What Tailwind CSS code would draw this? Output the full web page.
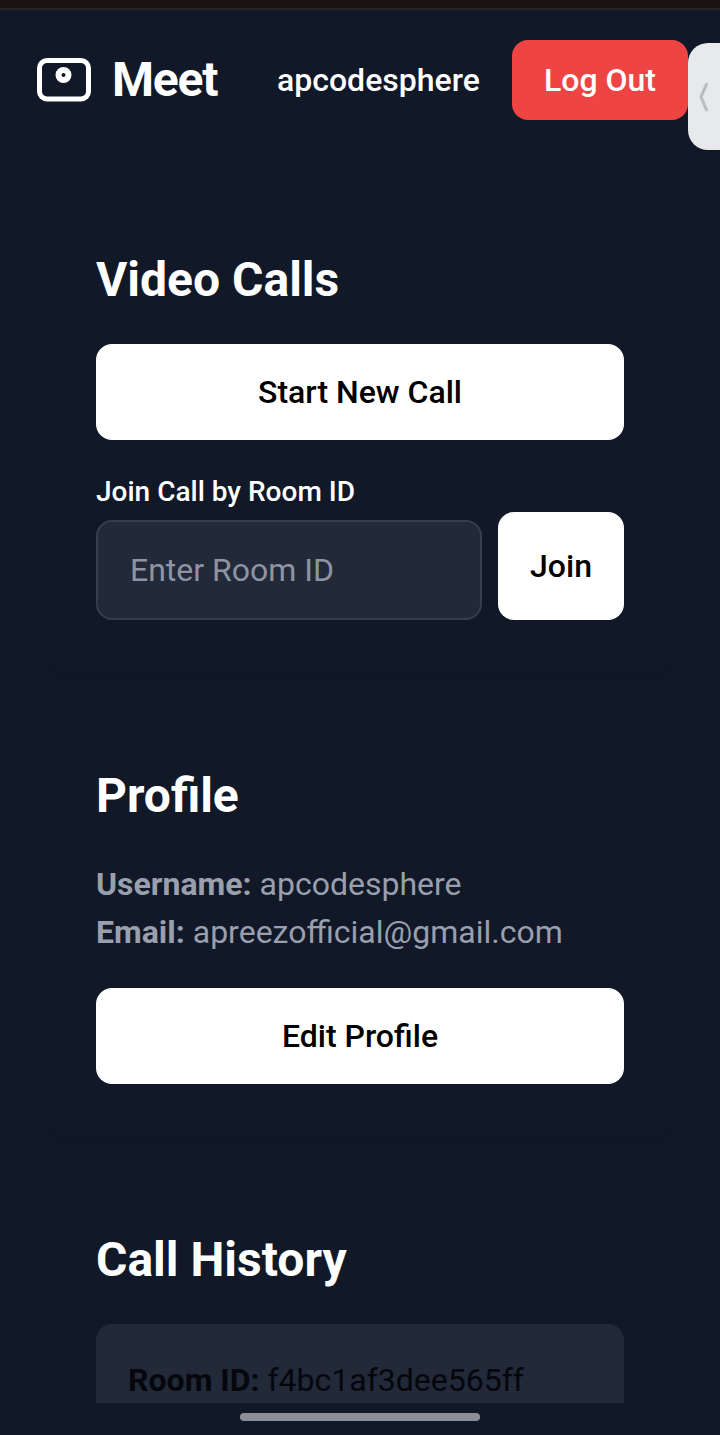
<!DOCTYPE html>
<html lang="en">
<head>
    <meta charset="utf-8">
    <meta name="viewport" content="width=device-width, initial-scale=1">
    <title>Meet</title>
    <script src="https://cdn.jsdelivr.net/npm/@tailwindcss/browser@4"></script>
</head>
<body class="bg-[#111827] font-['Roboto',sans-serif]">
    <div class="relative h-[1435px] w-[720px] overflow-hidden">
        <!-- Status strip -->
        <div class="h-[12px] bg-[#111827]">
            <div class="h-[8px] bg-[#1a1210]"></div>
            <div class="h-[2px] bg-[#2a2523]"></div>
        </div>

        <div class="h-[1391px] overflow-hidden">
            <!-- Header -->
            <header class="flex h-[140px] items-start pt-[28px] pl-[36px] shadow-[0_2px_6px_rgba(0,0,0,0.05)]">
                <div class="flex h-[80px] items-center">
                    <svg class="h-[44px] w-[56px]" viewBox="0 0 56 44" fill="none">
                        <rect x="3.5" y="2.5" width="49" height="38.5" rx="7.5" stroke="white" stroke-width="5"/>
                        <circle cx="27.5" cy="17" r="5" stroke="white" stroke-width="6"/>
                    </svg>
                    <span class="ml-[20px] w-[106px] text-[48px] font-bold leading-none tracking-[-1.2px] text-white">Meet</span>
                    <span class="ml-[59px] w-[203px] whitespace-nowrap text-[32px] font-medium text-white">apcodesphere</span>
                </div>
                <button class="ml-[32px] h-[80px] w-[176px] rounded-[16px] bg-[#ef4444] text-[32px] font-medium text-white">Log Out</button>
            </header>

            <main class="px-[48px] pt-[48px]">
                <!-- Video calls -->
                <section class="rounded-[16px] p-[48px] shadow-[0_10px_15px_-8px_rgba(0,0,0,0.08)]">
                    <h2 class="mb-[32px] text-[48px] font-bold leading-[64px] text-white">Video Calls</h2>
                    <button class="h-[96px] w-full rounded-[16px] bg-white text-[32px] font-medium text-black">Start New Call</button>
                    <label class="mt-[32px] block text-[28px] font-medium leading-[40px] text-white">Join Call by Room ID</label>
                    <div class="flex items-end gap-[16px]">
                        <input class="h-[100px] w-[386px] rounded-[16px] border-2 border-[#373d4d] bg-[#222938] px-[32px] text-[32px] text-white placeholder:text-[#8f94a3]" placeholder="Enter Room ID">
                        <button class="h-[108px] flex-1 rounded-[16px] bg-white text-[32px] font-medium text-black">Join</button>
                    </div>
                </section>

                <!-- Profile -->
                <section class="mt-[48px] rounded-[16px] p-[48px] shadow-[0_10px_15px_-8px_rgba(0,0,0,0.08)]">
                    <h2 class="mb-[32px] text-[48px] font-bold leading-[64px] text-white">Profile</h2>
                    <p class="text-[32px] leading-[48px] text-[#9a9fae]"><strong class="font-bold">Username:</strong> apcodesphere</p>
                    <p class="text-[32px] leading-[48px] text-[#9a9fae]"><strong class="font-bold">Email:</strong> apreezofficial@gmail.com</p>
                    <button class="mt-[32px] h-[96px] w-full rounded-[16px] bg-white text-[32px] font-medium text-black">Edit Profile</button>
                </section>

                <!-- Call history -->
                <section class="mt-[48px] px-[48px] pt-[48px]">
                    <h2 class="mb-[32px] text-[48px] font-bold leading-[64px] text-white">Call History</h2>
                    <div class="rounded-[16px] bg-[#222938] p-[32px]">
                        <p class="text-[32px] leading-[48px] text-[#05070d]"><strong class="font-bold">Room ID:</strong> f4bc1af3dee565ff</p>
                    </div>
                </section>
            </main>
        </div>

        <!-- Gesture bar -->
        <div class="flex h-[32px] justify-center pt-[10px]">
            <div class="h-[8px] w-[240px] rounded-full bg-[#8b8e96]"></div>
        </div>

        <!-- Side handle -->
        <div class="absolute top-[43px] left-[688px] flex h-[107px] w-[40px] items-center rounded-l-[20px] bg-[#e8e9eb] pl-[10px]">
            <svg class="h-[32px] w-[12px]" viewBox="0 0 12 32" fill="none">
                <path d="M9 2 L3 16 L9 30" stroke="#b8bbc0" stroke-width="3"/>
            </svg>
        </div>
    </div>
</body>
</html>
